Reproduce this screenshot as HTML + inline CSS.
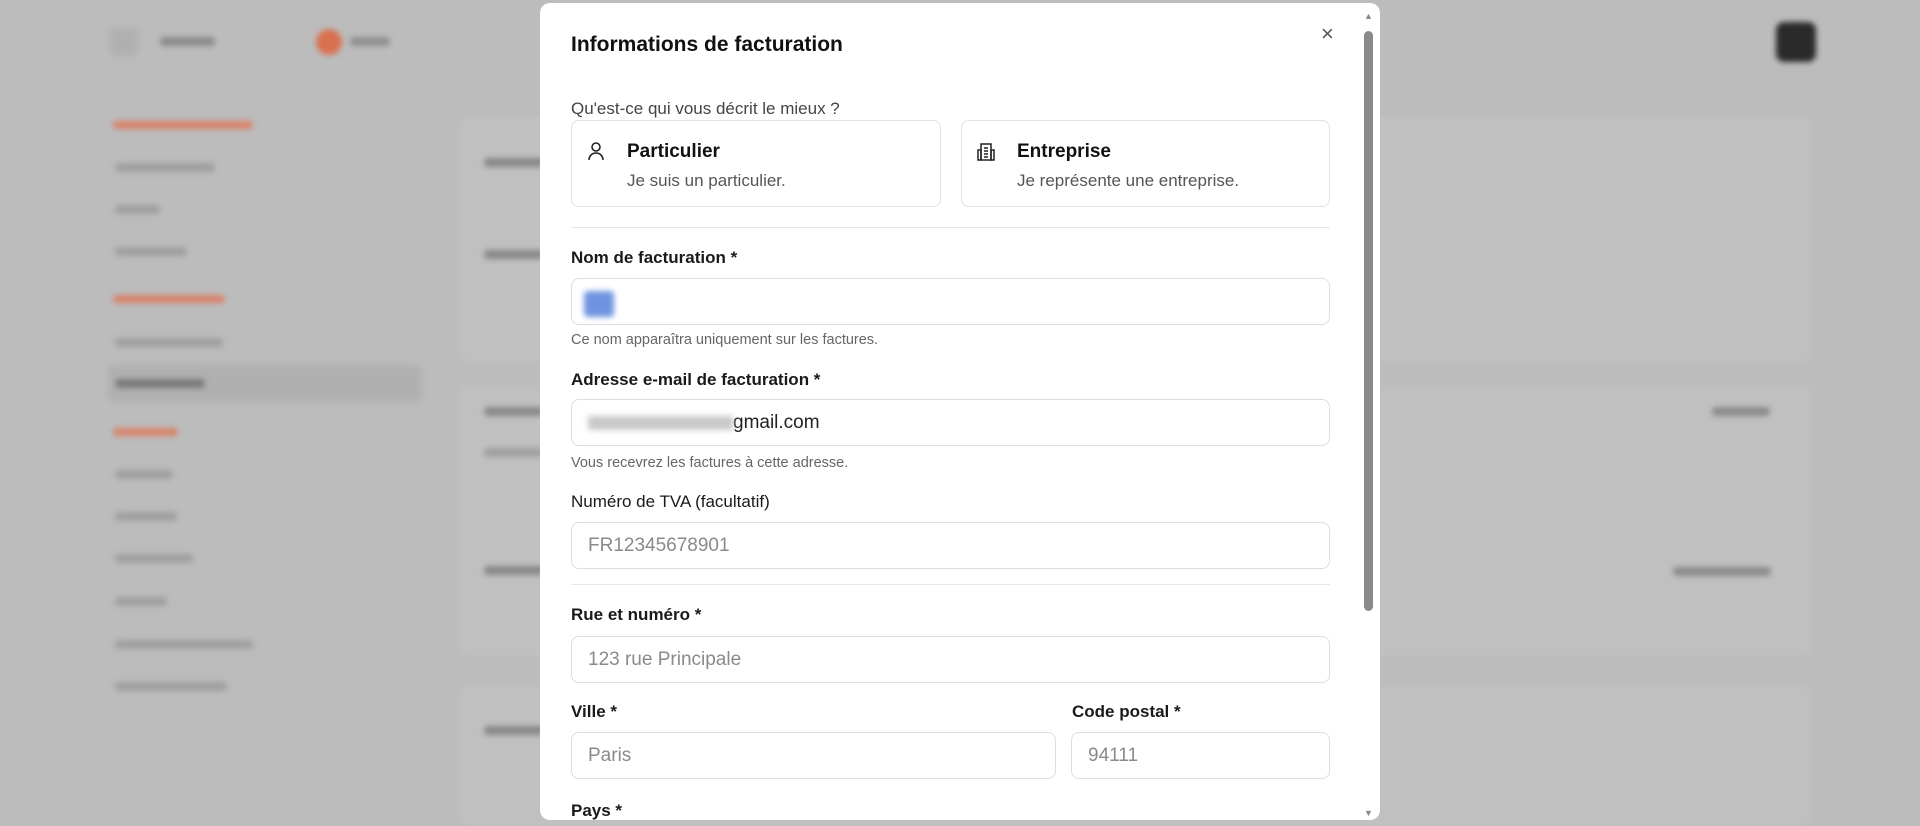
<!DOCTYPE html>
<html><head><meta charset="utf-8"><style>
*{margin:0;padding:0;box-sizing:border-box}
body{width:1920px;height:822px;overflow:hidden;background:#bcbcbc;font-family:"Liberation Sans",sans-serif;position:relative}
.bg{position:absolute;inset:0;filter:blur(3px)}
.bg div{position:absolute}
.s{height:9px;background:#9f9f9f;border-radius:4px}
.o{height:8px;background:#d9826a;border-radius:4px}
.m{position:absolute;left:540px;top:3px;width:840px;height:817px;background:#fff;border-radius:10px;overflow:hidden;color:#111}
.a{position:absolute}
.lbl{position:absolute;left:31px;font-size:17px;font-weight:600;color:#1a1a1a}
.inp{position:absolute;border:1px solid #dedede;border-radius:8px;height:47px;font-size:19px;color:#8a8a8a;padding:12px 16px}
.help{position:absolute;left:31px;font-size:14.5px;color:#666}
.card{position:absolute;top:117px;height:87px;border:1px solid #e2e2e2;border-radius:8px}
.hr{position:absolute;left:31px;width:759px;height:1px;background:#e8e8e8}
</style></head><body>
<div class="bg">
 <div style="left:110px;top:28px;width:28px;height:28px;background:#b0b0b0;border-radius:4px"></div>
 <div class="s" style="left:160px;top:37px;width:55px;background:#8a8a8a"></div>
 <div style="left:316px;top:29px;width:26px;height:26px;background:#d9704f;border-radius:50%"></div>
 <div class="s" style="left:350px;top:37px;width:40px;background:#8f8f8f"></div>
 <div style="left:1776px;top:22px;width:40px;height:40px;background:#2a2a2a;border-radius:8px"></div>
 <div class="o" style="left:113px;top:121px;width:140px"></div>
 <div class="s" style="left:115px;top:163px;width:100px"></div>
 <div class="s" style="left:115px;top:205px;width:45px"></div>
 <div class="s" style="left:115px;top:247px;width:72px"></div>
 <div class="o" style="left:113px;top:295px;width:112px"></div>
 <div class="s" style="left:115px;top:338px;width:108px"></div>
 <div style="left:108px;top:365px;width:314px;height:37px;background:#b0b0b0;border-radius:6px"></div>
 <div class="s" style="left:115px;top:379px;width:90px;background:#7a7a7a"></div>
 <div class="o" style="left:113px;top:428px;width:65px"></div>
 <div class="s" style="left:115px;top:470px;width:58px"></div>
 <div class="s" style="left:115px;top:512px;width:62px"></div>
 <div class="s" style="left:115px;top:554px;width:78px"></div>
 <div class="s" style="left:115px;top:597px;width:52px"></div>
 <div class="s" style="left:115px;top:640px;width:138px"></div>
 <div class="s" style="left:115px;top:682px;width:112px"></div>
 <div style="left:459px;top:116px;width:1353px;height:245px;background:#c0c0c0;border-radius:10px"></div>
 <div style="left:459px;top:386px;width:1353px;height:270px;background:#c0c0c0;border-radius:10px"></div>
 <div style="left:459px;top:686px;width:1353px;height:140px;background:#c0c0c0;border-radius:10px"></div>
 <div class="s" style="left:484px;top:158px;width:60px;background:#888"></div>
 <div class="s" style="left:484px;top:250px;width:60px;background:#888"></div>
 <div class="s" style="left:484px;top:407px;width:60px;background:#888"></div>
 <div class="s" style="left:484px;top:448px;width:60px"></div>
 <div class="s" style="left:484px;top:566px;width:60px;background:#888"></div>
 <div class="s" style="left:484px;top:726px;width:60px;background:#888"></div>
 <div class="s" style="left:1712px;top:407px;width:58px;background:#8a8a8a"></div>
 <div class="s" style="left:1673px;top:567px;width:98px;background:#8a8a8a"></div>
</div>
<div class="m">
 <div class="a" style="left:31px;top:30px;font-size:21px;font-weight:600">Informations de facturation</div>
 <div class="a" style="left:781px;top:18px;font-size:22px;color:#555">×</div>
 <div class="a" style="left:823px;top:8px;width:11px;height:800px;">
  <div style="position:absolute;top:0;left:1px;font-size:9px;color:#888">▲</div>
  <div style="position:absolute;top:20px;left:1px;width:9px;height:580px;background:#8a8a8a;border-radius:5px"></div>
  <div style="position:absolute;top:797px;left:1px;font-size:9px;color:#888">▼</div>
 </div>
 <div class="a" style="left:31px;top:96px;font-size:17px;color:#444">Qu'est-ce qui vous décrit le mieux ?</div>
 <div class="card" style="left:31px;width:370px">
  <svg class="a" style="left:15px;top:20px" width="18" height="20" viewBox="0 0 18 20" fill="none" stroke="#222" stroke-width="1.6"><circle cx="9" cy="6" r="4"/><path d="M2 19c0-4 3-7 7-7s7 3 7 7"/></svg>
  <div class="a" style="left:55px;top:20px;font-size:19px;font-weight:600">Particulier</div>
  <div class="a" style="left:55px;top:50px;font-size:17px;color:#555">Je suis un particulier.</div>
 </div>
 <div class="card" style="left:421px;width:369px">
  <svg class="a" style="left:14px;top:21px" width="20" height="20" viewBox="0 0 20 20" fill="none" stroke="#222" stroke-width="1.5"><rect x="5" y="2" width="10" height="16"/><path d="M2 8h3v10H2zM15 8h3v10h-3zM8 6h4M8 9h4M8 12h4M8 15h4"/></svg>
  <div class="a" style="left:55px;top:20px;font-size:19px;font-weight:600">Entreprise</div>
  <div class="a" style="left:55px;top:50px;font-size:17px;color:#555">Je représente une entreprise.</div>
 </div>
 <div class="hr" style="top:224px"></div>
 <div class="lbl" style="top:245px">Nom de facturation *</div>
 <div class="inp" style="left:31px;top:275px;width:759px"><div style="width:30px;height:26px;background:#6f93e0;border-radius:4px;filter:blur(3px);margin-left:-4px"></div></div>
 <div class="help" style="top:329px">Ce nom apparaîtra uniquement sur les factures.</div>
 <div class="lbl" style="top:367px">Adresse e-mail de facturation *</div>
 <div class="inp" style="left:31px;top:396px;width:759px;color:#222"><span style="display:inline-block;width:145px;height:14px;background:#c8c8c8;filter:blur(3px);vertical-align:middle"></span>gmail.com</div>
 <div class="help" style="top:452px">Vous recevrez les factures à cette adresse.</div>
 <div class="lbl" style="top:489px;font-weight:400">Numéro de TVA (facultatif)</div>
 <div class="inp" style="left:31px;top:519px;width:759px">FR12345678901</div>
 <div class="hr" style="top:581px"></div>
 <div class="lbl" style="top:602px">Rue et numéro *</div>
 <div class="inp" style="left:31px;top:633px;width:759px">123 rue Principale</div>
 <div class="lbl" style="top:699px">Ville *</div>
 <div class="lbl" style="top:699px;left:532px">Code postal *</div>
 <div class="inp" style="left:31px;top:729px;width:485px">Paris</div>
 <div class="inp" style="left:531px;top:729px;width:259px">94111</div>
 <div class="lbl" style="top:798px">Pays *</div>
</div>
</body></html>
